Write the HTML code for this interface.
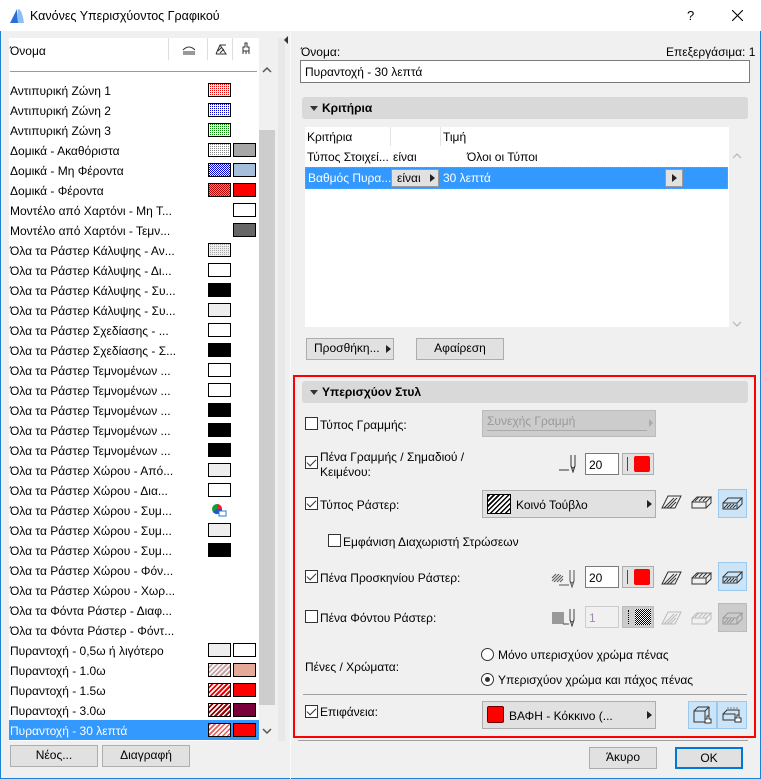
<!DOCTYPE html>
<html><head><meta charset="utf-8">
<style>
*{margin:0;padding:0;box-sizing:border-box}
body{width:761px;height:779px;background:#f0f0f0;font-family:"Liberation Sans","DejaVu Sans",sans-serif;font-size:12px;color:#000;position:relative;overflow:hidden}
.a{position:absolute}
.t{position:absolute;white-space:nowrap;line-height:14px}
.btn{position:absolute;background:#e1e1e1;border:1px solid #adadad;text-align:center;line-height:19px}
.sw{position:absolute;width:23px;height:14px;border:1px solid #000}
.cb{position:absolute;width:13px;height:13px;border:1px solid #333;background:#fff}
.cb.on::after{content:"";position:absolute;left:3px;top:0px;width:4px;height:8px;border:solid #333;border-width:0 1.5px 1.5px 0;transform:rotate(45deg)}
.dd{position:absolute;background:#e1e1e1;border:1px solid #adadad}
.arr{position:absolute;width:0;height:0;border-left:5px solid #222;border-top:4px solid transparent;border-bottom:4px solid transparent}
.hdr{position:absolute;background:#d9d9d9;border-radius:3px;font-weight:bold}
.hdr::before{content:"";position:absolute;left:8px;top:9px;border-top:5px solid #333;border-left:4px solid transparent;border-right:4px solid transparent}
.inp{position:absolute;background:#fff;border:1px solid #7a7a7a}
.dot{background-color:#fff;background-image:conic-gradient(var(--c) 0 25%,transparent 0);background-size:2px 2px}
.chk{background:repeating-conic-gradient(var(--c) 0 25%,var(--b) 0 50%) 0 0/2px 2px}
.hat{background:repeating-linear-gradient(135deg,var(--c) 0 1.5px,var(--b) 1.5px 3.5px)}
.sel{background:#cce4f7;border:1px solid #99c9ef}
</style></head><body>
<div class="a" style="left:0;top:0;width:761px;height:31px;background:#fff"></div>
<svg class="a" style="left:9px;top:8px" width="16" height="16"><path d="M1 15 L8 1 L9 15Z" fill="#2a6fd8"/><path d="M9 15 L9 1 Q13 1 15 15Z" fill="#8cc0f5"/></svg>
<div class="t" style="left:30px;top:9px;font-size:12.5px">Κανόνες Υπερισχύοντος Γραφικού</div>
<div class="t" style="left:687px;top:9px;font-size:13px">?</div>
<svg class="a" style="left:732px;top:10px" width="11" height="11"><path d="M0 0L11 11M11 0L0 11" stroke="#000" stroke-width="1.1"/></svg>
<div class="a" style="left:0;top:31px;width:1px;height:748px;background:#1883d7"></div>
<div class="a" style="right:0;top:31px;width:1px;height:748px;background:#1883d7"></div>
<div class="a" style="left:0;bottom:0;width:761px;height:1px;background:#1883d7"></div>

<div class="a" style="left:9px;top:38px;width:250px;height:703px;background:#fff"></div>
<div class="t" style="left:10px;top:44px">Όνομα</div>
<div class="a" style="left:168px;top:38px;width:1px;height:22px;background:#ddd"></div>
<div class="a" style="left:207px;top:38px;width:1px;height:22px;background:#ddd"></div>
<div class="a" style="left:232px;top:38px;width:1px;height:22px;background:#ddd"></div>
<svg class="a" style="left:182px;top:44px" width="14" height="11"><path d="M1 6Q7 0 13 6M1 8H13M1 10H13" stroke="#333" fill="none"/></svg>
<svg class="a" style="left:215px;top:43px" width="12" height="12"><path d="M1 11L5 2H11M1 11H11L5 2M3 8L7 4M5 10L9 6" stroke="#333" fill="none"/></svg>
<svg class="a" style="left:241px;top:42px" width="10" height="13"><path d="M4 1H6V5H8V9H2V5H4ZM2 9V12M5 9V12M8 9V12" stroke="#333" fill="none"/></svg>
<div class="a" style="left:10px;top:71px;width:247px;height:1px;background:#999"></div>
<div class="a" style="left:259px;top:60px;width:16px;height:681px;background:#f0f0f0"></div>
<div class="a" style="left:259px;top:130px;width:16px;height:575px;background:#cdcdcd"></div>
<svg class="a" style="left:262px;top:66px" width="10" height="7"><path d="M1 6L5 2L9 6" stroke="#555" stroke-width="1.5" fill="none"/></svg>
<svg class="a" style="left:262px;top:728px" width="10" height="7"><path d="M1 1L5 5L9 1" stroke="#555" stroke-width="1.5" fill="none"/></svg>
<div class="a" style="left:278px;top:38px;width:7px;height:703px;background:#e8e8e8"></div>
<div class="a" style="left:284px;top:36px;border-right:4px solid #333;border-top:4px solid transparent;border-bottom:4px solid transparent"></div>
<div class="a" style="left:290px;top:31px;width:1px;height:748px;background:#fafafa"></div>

<div class="a" style="left:9px;top:720px;width:250px;height:20px;background:#3399ff"></div>

<div class="t" style="left:10px;top:84px">Αντιπυρική Ζώνη 1</div>
<div class="t" style="left:10px;top:104px">Αντιπυρική Ζώνη 2</div>
<div class="t" style="left:10px;top:124px">Αντιπυρική Ζώνη 3</div>
<div class="t" style="left:10px;top:144px">Δομικά - Ακαθόριστα</div>
<div class="t" style="left:10px;top:164px">Δομικά - Μη Φέροντα</div>
<div class="t" style="left:10px;top:184px">Δομικά - Φέροντα</div>
<div class="t" style="left:10px;top:204px">Μοντέλο από Χαρτόνι - Μη Τ...</div>
<div class="t" style="left:10px;top:224px">Μοντέλο από Χαρτόνι - Τεμν...</div>
<div class="t" style="left:10px;top:244px">Όλα τα Ράστερ Κάλυψης - Αν...</div>
<div class="t" style="left:10px;top:264px">Όλα τα Ράστερ Κάλυψης - Δι...</div>
<div class="t" style="left:10px;top:284px">Όλα τα Ράστερ Κάλυψης - Συ...</div>
<div class="t" style="left:10px;top:304px">Όλα τα Ράστερ Κάλυψης - Συ...</div>
<div class="t" style="left:10px;top:324px">Όλα τα Ράστερ Σχεδίασης - ...</div>
<div class="t" style="left:10px;top:344px">Όλα τα Ράστερ Σχεδίασης - Σ...</div>
<div class="t" style="left:10px;top:364px">Όλα τα Ράστερ Τεμνομένων ...</div>
<div class="t" style="left:10px;top:384px">Όλα τα Ράστερ Τεμνομένων ...</div>
<div class="t" style="left:10px;top:404px">Όλα τα Ράστερ Τεμνομένων ...</div>
<div class="t" style="left:10px;top:424px">Όλα τα Ράστερ Τεμνομένων ...</div>
<div class="t" style="left:10px;top:444px">Όλα τα Ράστερ Τεμνομένων ...</div>
<div class="t" style="left:10px;top:464px">Όλα τα Ράστερ Χώρου - Από...</div>
<div class="t" style="left:10px;top:484px">Όλα τα Ράστερ Χώρου - Δια...</div>
<div class="t" style="left:10px;top:504px">Όλα τα Ράστερ Χώρου - Συμ...</div>
<div class="t" style="left:10px;top:524px">Όλα τα Ράστερ Χώρου - Συμ...</div>
<div class="t" style="left:10px;top:544px">Όλα τα Ράστερ Χώρου - Συμ...</div>
<div class="t" style="left:10px;top:564px">Όλα τα Ράστερ Χώρου - Φόν...</div>
<div class="t" style="left:10px;top:584px">Όλα τα Ράστερ Χώρου - Χωρ...</div>
<div class="t" style="left:10px;top:604px">Όλα τα Φόντα Ράστερ - Διαφ...</div>
<div class="t" style="left:10px;top:624px">Όλα τα Φόντα Ράστερ - Φόντ...</div>
<div class="t" style="left:10px;top:644px">Πυραντοχή - 0,5ω ή λιγότερο</div>
<div class="t" style="left:10px;top:664px">Πυραντοχή - 1.0ω</div>
<div class="t" style="left:10px;top:684px">Πυραντοχή - 1.5ω</div>
<div class="t" style="left:10px;top:704px">Πυραντοχή - 3.0ω</div>
<div class="t" style="left:10px;top:724px;color:#fff">Πυραντοχή - 30 λεπτά</div>

<div class="sw dot" style="left:208px;top:83px;--c:#e00"></div>
<div class="sw dot" style="left:208px;top:103px;--c:#00c"></div>
<div class="sw dot" style="left:208px;top:123px;--c:#080"></div>
<div class="sw dot" style="left:208px;top:143px;--c:#888"></div><div class="sw" style="left:233px;top:143px;background:#a6a6a6"></div>
<div class="sw chk" style="left:208px;top:163px;--c:#00d;--b:#fff"></div><div class="sw" style="left:233px;top:163px;background:#a4bedb"></div>
<div class="sw chk" style="left:208px;top:183px;--c:#b00;--b:#f88"></div><div class="sw" style="left:233px;top:183px;background:#f00"></div>
<div class="sw" style="left:233px;top:203px;background:#fff"></div>
<div class="sw" style="left:233px;top:223px;background:#666"></div>
<div class="sw dot" style="left:208px;top:243px;--c:#aaa;background-color:#eee"></div>
<div class="sw" style="left:208px;top:263px;background:#fff"></div>
<div class="sw" style="left:208px;top:283px;background:#000"></div>
<div class="sw" style="left:208px;top:303px;background:#eee"></div>
<div class="sw" style="left:208px;top:323px;background:#fff"></div>
<div class="sw" style="left:208px;top:343px;background:#000"></div>
<div class="sw" style="left:208px;top:363px;background:#fff"></div>
<div class="sw" style="left:208px;top:383px;background:#fff"></div>
<div class="sw" style="left:208px;top:403px;background:#000"></div>
<div class="sw" style="left:208px;top:423px;background:#000"></div>
<div class="sw" style="left:208px;top:443px;background:#000"></div>
<div class="sw" style="left:208px;top:463px;background:#eee"></div>
<div class="sw" style="left:208px;top:483px;background:#fff"></div>
<svg class="a" style="left:211px;top:503px" width="16" height="14"><circle cx="6" cy="6" r="5" fill="#1a9b3c"/><path d="M6 6V1A5 5 0 0 1 11 6Z" fill="#e23"/><path d="M6 6H11A5 5 0 0 1 2 9Z" fill="#2255cc"/><rect x="8" y="8" width="7" height="5" fill="#fff" stroke="#2a7bd8"/></svg>
<div class="sw" style="left:208px;top:523px;background:#eee"></div>
<div class="sw" style="left:208px;top:543px;background:#000"></div>
<div class="sw" style="left:208px;top:643px;background:#eee"></div><div class="sw" style="left:233px;top:643px;background:#fff"></div>
<div class="sw hat" style="left:208px;top:663px;--c:#fff;--b:#c9a3a3"></div><div class="sw" style="left:233px;top:663px;background:#e5a998"></div>
<div class="sw hat" style="left:208px;top:683px;--c:#fff;--b:#e00"></div><div class="sw" style="left:233px;top:683px;background:#f00"></div>
<div class="sw hat" style="left:208px;top:703px;--c:#fff;--b:#900"></div><div class="sw" style="left:233px;top:703px;background:#7a003a"></div>
<div class="sw hat" style="left:208px;top:723px;--c:#e55;--b:#fff"></div><div class="sw" style="left:233px;top:723px;background:#f00"></div>

<div class="btn" style="left:10px;top:745px;width:88px;height:22px">Νέος...</div>
<div class="btn" style="left:102px;top:745px;width:88px;height:22px">Διαγραφή</div>

<div class="t" style="left:301px;top:45px">Όνομα:</div>
<div class="t" style="left:666px;top:45px">Επεξεργάσιμα: 1</div>
<div class="inp" style="left:300px;top:60px;width:450px;height:23px"></div>
<div class="t" style="left:305px;top:65px">Πυραντοχή - 30 λεπτά</div>
<div class="hdr" style="left:302px;top:97px;width:446px;height:22px"><span class="t" style="left:20px;top:4px">Κριτήρια</span></div>
<div class="a" style="left:305px;top:127px;width:424px;height:200px;background:#fff"></div>
<div class="a" style="left:390px;top:127px;width:1px;height:19px;background:#e4e4e4"></div>
<div class="a" style="left:440px;top:127px;width:1px;height:19px;background:#e4e4e4"></div>
<div class="t" style="left:307px;top:130px">Κριτήρια</div>
<div class="t" style="left:443px;top:130px">Τιμή</div>
<div class="t" style="left:307px;top:150px">Τύπος Στοιχεί...</div>
<div class="t" style="left:393px;top:150px">είναι</div>
<div class="t" style="left:467px;top:150px">Όλοι οι Τύποι</div>
<div class="a" style="left:305px;top:167px;width:423px;height:22px;background:#3399ff;border:1px dotted #c87"></div>
<div class="t" style="left:308px;top:171px;color:#fff">Βαθμός Πυρα...</div>
<div class="a" style="left:391px;top:169px;width:48px;height:18px;background:#e1e1e1;border:1px solid #999"></div>
<div class="t" style="left:397px;top:171px">είναι</div>
<div class="arr" style="left:430px;top:174px"></div>
<div class="t" style="left:443px;top:171px;color:#fff">30 λεπτά</div>
<div class="a" style="left:665px;top:169px;width:18px;height:18px;background:#e1e1e1;border:1px solid #999"></div>
<div class="arr" style="left:672px;top:174px"></div>
<svg class="a" style="left:732px;top:152px" width="10" height="7"><path d="M1 6L5 2L9 6" stroke="#bbb" stroke-width="1.3" fill="none"/></svg>
<svg class="a" style="left:732px;top:321px" width="10" height="7"><path d="M1 1L5 5L9 1" stroke="#bbb" stroke-width="1.3" fill="none"/></svg>
<div class="btn" style="left:306px;top:338px;width:88px;height:22px;text-align:left;padding-left:7px">Προσθήκη...</div>
<div class="arr" style="left:386px;top:345px"></div>
<div class="btn" style="left:416px;top:338px;width:88px;height:22px">Αφαίρεση</div>

<div class="a" style="left:293px;top:375px;width:463px;height:363px;border:2px solid #f00"></div>
<div class="hdr" style="left:302px;top:381px;width:446px;height:22px"><span class="t" style="left:20px;top:4px">Υπερισχύον Στυλ</span></div>

<div class="cb" style="left:305px;top:417px"></div>
<div class="t" style="left:320px;top:418px">Τύπος Γραμμής:</div>
<div class="dd" style="left:482px;top:410px;width:174px;height:27px;background:#ccc;border-color:#bbb"></div>
<div class="t" style="left:487px;top:414px;color:#999">Συνεχής Γραμμή</div>
<div class="a" style="left:487px;top:430px;width:160px;height:1px;background:#aaa"></div>
<div class="a" style="left:649px;top:419px;border-left:4px solid #aaa;border-top:4px solid transparent;border-bottom:4px solid transparent"></div>

<div class="cb on" style="left:305px;top:456px"></div>
<div class="t" style="left:320px;top:450px">Πένα Γραμμής / Σημαδιού /</div>
<div class="t" style="left:320px;top:465px">Κειμένου:</div>
<svg class="a" style="left:558px;top:453px" width="22" height="20"><path d="M1 17H11M13 2V13Q15 17 17 13V2M13 13L15 19L17 13" stroke="#333" fill="none"/></svg>
<div class="inp" style="left:585px;top:453px;width:34px;height:22px"></div>
<div class="t" style="left:589px;top:458px">20</div>
<div class="a" style="left:622px;top:453px;width:32px;height:22px;background:#e1e1e1;border:1px solid #adadad"></div>
<div class="a" style="left:627px;top:457px;width:1px;height:14px;background:#f00"></div>
<div class="a" style="left:634px;top:456px;width:16px;height:16px;background:#f00;border-radius:2px"></div>

<div class="cb on" style="left:305px;top:497px"></div>
<div class="t" style="left:320px;top:498px">Τύπος Ράστερ:</div>
<div class="dd" style="left:482px;top:490px;width:174px;height:28px"></div>
<div class="a hat" style="left:487px;top:494px;width:24px;height:20px;border:1px solid #000;--c:#000;--b:#fff"></div>
<div class="t" style="left:516px;top:498px">Κοινό Τούβλο</div>
<div class="arr" style="left:647px;top:500px"></div>

<div class="cb" style="left:328px;top:534px"></div>
<div class="t" style="left:343px;top:535px">Εμφάνιση Διαχωριστή Στρώσεων</div>

<div class="cb on" style="left:305px;top:570px"></div>
<div class="t" style="left:320px;top:571px">Πένα Προσκηνίου Ράστερ:</div>
<svg class="a" style="left:551px;top:568px" width="30" height="20"><path d="M1 10L5 6M1 13L8 6M3 14L10 7M6 14L12 8M9 14L12 11M8 17H18M19 2V13Q21 17 23 13V2M19 13L21 19L23 13" stroke="#555" fill="none"/></svg>
<div class="inp" style="left:585px;top:566px;width:34px;height:22px"></div>
<div class="t" style="left:589px;top:571px">20</div>
<div class="a" style="left:622px;top:566px;width:32px;height:22px;background:#e1e1e1;border:1px solid #adadad"></div>
<div class="a" style="left:627px;top:570px;width:1px;height:14px;background:#f00"></div>
<div class="a" style="left:634px;top:569px;width:16px;height:16px;background:#f00;border-radius:2px"></div>

<div class="cb" style="left:305px;top:610px"></div>
<div class="t" style="left:320px;top:611px">Πένα Φόντου Ράστερ:</div>
<div class="a" style="left:552px;top:612px;width:12px;height:12px;background:#999"></div>
<svg class="a" style="left:562px;top:607px" width="20" height="20"><path d="M1 17H7M8 2V13Q10 17 12 13V2M8 13L10 19L12 13" stroke="#444" fill="none"/></svg>
<div class="inp" style="left:585px;top:606px;width:34px;height:22px;border-color:#ccc;background:#f0f0f0"></div>
<div class="t" style="left:589px;top:611px;color:#a08ab0">1</div>
<div class="a" style="left:622px;top:606px;width:32px;height:22px;background:#ccc;border:1px solid #bbb"></div>
<div class="a" style="left:628px;top:610px;width:1px;height:14px;border-left:1px dotted #000"></div>
<div class="a chk" style="left:635px;top:609px;width:16px;height:16px;--c:#000;--b:#fff"></div>

<svg class="a" style="left:661px;top:494px" width="22" height="16"><path d="M1 14L7 2H20L14 14Z" fill="none" stroke="#333"/><path d="M3 14L13 4M6 14L16 4M9 14L15 8" stroke="#333" fill="none"/></svg>
<svg class="a" style="left:691px;top:494px" width="22" height="16"><path d="M1 8H15V14H1ZM1 8L6 3H20L15 8M15 14L20 9V3" fill="none" stroke="#333"/><path d="M4 7L8 3M8 7L12 3M12 7L16 3" stroke="#333"/></svg>
<div class="a sel" style="left:718px;top:489px;width:29px;height:29px"></div>
<svg class="a" style="left:721px;top:495px" width="24" height="16"><path d="M2 8H16V14H2ZM2 8L7 3H21L16 8M16 14L21 9V3" fill="none" stroke="#333"/><path d="M3 13L7 9M6 13L10 9M9 13L13 9M12 13L15 10" stroke="#333"/></svg>

<svg class="a" style="left:661px;top:570px" width="22" height="16"><path d="M1 14L7 2H20L14 14Z" fill="none" stroke="#333"/><path d="M3 14L13 4M6 14L16 4M9 14L15 8" stroke="#333" fill="none"/></svg>
<svg class="a" style="left:691px;top:570px" width="22" height="16"><path d="M1 8H15V14H1ZM1 8L6 3H20L15 8M15 14L20 9V3" fill="none" stroke="#333"/><path d="M4 7L8 3M8 7L12 3M12 7L16 3" stroke="#333"/></svg>
<div class="a sel" style="left:718px;top:562px;width:29px;height:29px"></div>
<svg class="a" style="left:721px;top:569px" width="24" height="16"><path d="M2 8H16V14H2ZM2 8L7 3H21L16 8M16 14L21 9V3" fill="none" stroke="#333"/><path d="M3 13L7 9M6 13L10 9M9 13L13 9M12 13L15 10" stroke="#333"/></svg>

<svg class="a" style="left:661px;top:610px" width="22" height="16"><path d="M1 14L7 2H20L14 14Z" fill="none" stroke="#bbb"/><path d="M3 14L13 4M6 14L16 4M9 14L15 8" stroke="#bbb" fill="none"/></svg>
<svg class="a" style="left:691px;top:610px" width="22" height="16"><path d="M1 8H15V14H1ZM1 8L6 3H20L15 8M15 14L20 9V3" fill="none" stroke="#bbb"/><path d="M4 7L8 3M8 7L12 3M12 7L16 3" stroke="#bbb"/></svg>
<div class="a" style="left:718px;top:603px;width:29px;height:29px;background:#ccc;border:1px solid #bbb"></div>
<svg class="a" style="left:721px;top:610px" width="24" height="16"><path d="M2 8H16V14H2ZM2 8L7 3H21L16 8M16 14L21 9V3" fill="none" stroke="#999"/><path d="M3 13L7 9M6 13L10 9M9 13L13 9" stroke="#999"/></svg>

<div class="t" style="left:305px;top:660px">Πένες / Χρώματα:</div>
<div class="a" style="left:481px;top:648px;width:13px;height:13px;border:1px solid #333;border-radius:50%;background:#fff"></div>
<div class="t" style="left:498px;top:648px">Μόνο υπερισχύον χρώμα πένας</div>
<div class="a" style="left:481px;top:673px;width:13px;height:13px;border:1px solid #333;border-radius:50%;background:#fff"></div>
<div class="a" style="left:485px;top:677px;width:5px;height:5px;border-radius:50%;background:#333"></div>
<div class="t" style="left:498px;top:673px">Υπερισχύον χρώμα και πάχος πένας</div>
<div class="a" style="left:303px;top:694px;width:444px;height:1px;background:#a0a0a0"></div>

<div class="cb on" style="left:305px;top:705px"></div>
<div class="t" style="left:320px;top:705px">Επιφάνεια:</div>
<div class="dd" style="left:482px;top:701px;width:174px;height:28px"></div>
<div class="a" style="left:487px;top:706px;width:17px;height:17px;background:#f00;border:1px solid #600;border-radius:2px"></div>
<div class="t" style="left:509px;top:709px">ΒΑΦΗ - Κόκκινο (...</div>
<div class="arr" style="left:647px;top:711px"></div>
<div class="a sel" style="left:688px;top:701px;width:29px;height:28px"></div>
<div class="a sel" style="left:717px;top:701px;width:30px;height:28px"></div>
<svg class="a" style="left:692px;top:705px" width="22" height="20"><path d="M2 6H13V17H2ZM2 6L6 2H17V13L13 17M13 6L17 2" fill="none" stroke="#333"/><path d="M15 11H17V14H19V18H13V14H15Z" fill="#fff" stroke="#333"/></svg>
<svg class="a" style="left:721px;top:705px" width="24" height="20"><path d="M2 9H14V15H2ZM2 9L6 5H18V10" fill="none" stroke="#333"/><path d="M6 3H18" stroke="#888" stroke-dasharray="2 1"/><path d="M16 10H18V13H20V17H14V13H16Z" fill="#fff" stroke="#333"/></svg>

<div class="a" style="left:298px;top:740px;width:450px;height:1px;background:#a0a0a0"></div>
<div class="btn" style="left:589px;top:747px;width:68px;height:22px">Άκυρο</div>
<div class="btn" style="left:675px;top:747px;width:68px;height:22px;border:2px solid #0078d7;line-height:18px">OK</div>
</body></html>
